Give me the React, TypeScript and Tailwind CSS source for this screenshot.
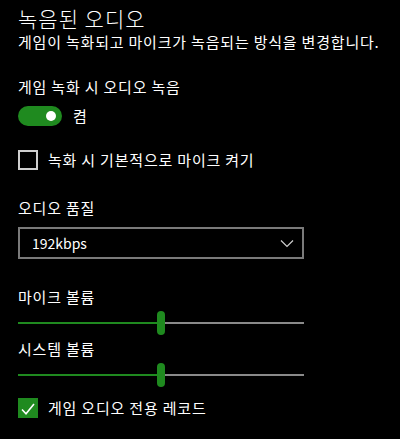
import React from 'react';

const font = { fontFamily: '"Noto Sans CJK KR", "Noto Sans", sans-serif' };

const Slider = ({ value }: { value: number }) => (
  <div className="relative w-[286px] h-[24px] flex items-center">
    <div className="h-[2px] bg-[#1f8a1f]" style={{ width: `${value}%` }} />
    <div className="h-[2px] flex-1 bg-[#8a8a8a]" />
    <div
      className="absolute top-0 h-[24px] w-[8px] rounded-full bg-[#1f8a1f]"
      style={{ left: `calc(${value}% - 4px)` }}
    />
  </div>
);

export default function App() {
  return (
    <div
      className="w-[400px] h-[439px] bg-black text-white px-[18px] pt-[3px] overflow-hidden"
      style={font}
    >
      {/* Header */}
      <h1 className="text-[21px] leading-[30px] font-light tracking-[1px]">녹음된 오디오</h1>
      <p className="text-[15px] leading-[20px] tracking-[0.8px] -mt-[1px]">
        게임이 녹화되고 마이크가 녹음되는 방식을 변경합니다.
      </p>

      {/* Record audio toggle */}
      <p className="text-[15px] leading-[20px] tracking-[0.8px] mt-[25px]">게임 녹화 시 오디오 녹음</p>
      <div className="flex items-center gap-[11px] mt-[8px]">
        <div className="w-[44px] h-[20px] rounded-full bg-[#1f8a1f] flex items-center justify-end pr-[6px]">
          <div className="w-[10px] h-[10px] rounded-full bg-white" />
        </div>
        <span className="text-[15px]">켬</span>
      </div>

      {/* Mic default checkbox */}
      <label className="flex items-center gap-[10px] mt-[21px]">
        <div className="w-[20px] h-[20px] border-2 border-[#cfcfcf]" />
        <span className="text-[15px] tracking-[0.8px]">녹화 시 기본적으로 마이크 켜기</span>
      </label>

      {/* Audio quality */}
      <p className="text-[15px] leading-[20px] tracking-[0.8px] mt-[27px]">오디오 품질</p>
      <div className="w-[286px] h-[32px] mt-[9px] border-2 border-[#7a7a7a] flex items-center justify-between pl-[12px] pr-[8px]">
        <span className="text-[14px]">192kbps</span>
        <svg width="14" height="10" viewBox="0 0 14 10" fill="none" stroke="#cfcfcf" strokeWidth="1.2">
          <path d="M1 2.5l6 6 6-6" />
        </svg>
      </div>

      {/* Volumes */}
      <p className="text-[15px] leading-[20px] tracking-[0.8px] mt-[28px]">마이크 볼륨</p>
      <div className="mt-[4px]">
        <Slider value={50} />
      </div>
      <p className="text-[15px] leading-[20px] tracking-[0.8px] mt-[4px]">시스템 볼륨</p>
      <div className="mt-[4px]">
        <Slider value={50} />
      </div>

      {/* Game audio only */}
      <label className="flex items-center gap-[10px] mt-[10px]">
        <div className="w-[20px] h-[20px] bg-[#1f8a1f] flex items-end justify-center pb-[3px]">
          <svg width="14" height="12" viewBox="0 0 14 12" fill="none" stroke="white" strokeWidth="1.6">
            <path d="M1 6.5l4 4.3L13 1" />
          </svg>
        </div>
        <span className="text-[15px] tracking-[0.8px]">게임 오디오 전용 레코드</span>
      </label>
    </div>
  );
}
